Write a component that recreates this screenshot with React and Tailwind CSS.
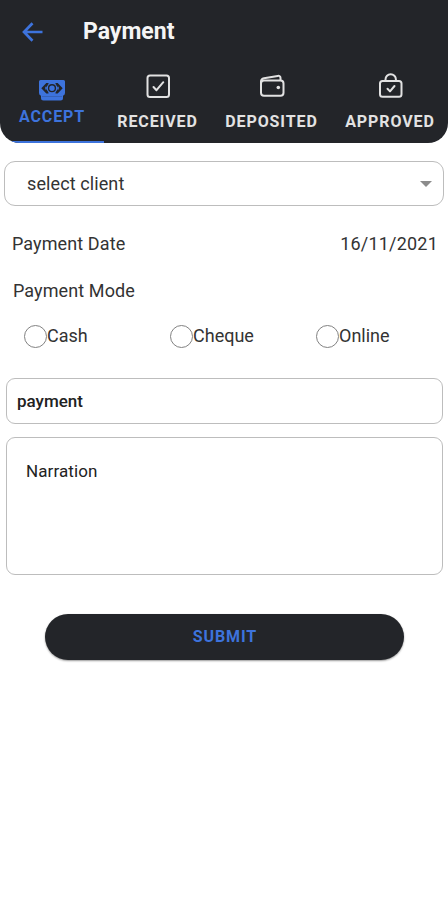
import React, { useState } from 'react';

const CashIcon = () => (
  <svg width="28" height="28" viewBox="0 0 28 28">
    <path d="M2.500 4h23A1.500 1.500 0 0 1 27 5.500V17a3 3 0 0 1-2 2.800V22a2.500 2.500 0 0 1-2.500 2.500h-17A2.500 2.500 0 0 1 3 22v-2.200A3 3 0 0 1 1 17V5.500A1.500 1.500 0 0 1 2.500 4z" fill="currentColor" />
    <path d="M3.300 12.200 8.300 7h2.200v10.400H8.300zM24.700 12.200 19.700 7h-2.200v10.400h2.200z" fill="#232529" />
    <path d="M8 10.800v2.800M20 10.800v2.800" stroke="currentColor" strokeWidth="1.500" />
    <circle cx="14" cy="12.200" r="5.400" fill="currentColor" />
    <circle cx="14" cy="12.200" r="3.400" fill="none" stroke="#232529" strokeWidth="1.400" />
    <path d="M4 20.300h20" stroke="#232529" strokeWidth="0.500" opacity="0.500" />
  </svg>
);

const CheckboxIcon = () => (
  <svg width="28" height="28" viewBox="0 0 28 28" fill="none" stroke="currentColor" strokeWidth="2" strokeLinecap="round" strokeLinejoin="round">
    <rect x="3.500" y="3.500" width="21.500" height="21.500" rx="2.500" />
    <path d="m9.500 15 3 3.200 6.800-8" />
  </svg>
);

const WalletIcon = () => (
  <svg width="28" height="28" viewBox="0 0 28 28" fill="none" stroke="currentColor" strokeWidth="2" strokeLinejoin="round">
    <rect x="3" y="8.500" width="22.500" height="15.300" rx="3" />
    <path d="M3 12.500V9.500c0-2 1.200-3 3-3.300l13.700-2.300c1.600-.3 2.800.6 2.800 2.200v2.400" />
    <circle cx="20.300" cy="15.500" r="1.800" fill="currentColor" stroke="none" />
  </svg>
);

const BagIcon = () => (
  <svg width="28" height="28" viewBox="0 0 28 28" fill="none" stroke="currentColor" strokeWidth="2" strokeLinecap="round" strokeLinejoin="round">
    <rect x="4" y="9" width="21.500" height="15.800" rx="2.500" />
    <path d="M9.500 9V7.500a5.200 5.200 0 0 1 10.400 0V9M11.500 16.800l2.500 2.600 4.500-5.400" />
  </svg>
);

const tabs = [
  { label: 'ACCEPT', icon: CashIcon, width: 'w-[104px]' },
  { label: 'RECEIVED', icon: CheckboxIcon, width: 'w-[107px]' },
  { label: 'DEPOSITED', icon: WalletIcon, width: 'w-[121px]' },
  { label: 'APPROVED', icon: BagIcon, width: 'w-[116px]' },
];

const modes = ['Cash', 'Cheque', 'Online'];

export default function App() {
  const [active, setActive] = useState('ACCEPT');
  const [mode, setMode] = useState('');

  return (
    <div className="min-h-[900px] w-[448px] bg-white font-[Roboto,sans-serif] text-[18px] text-[#333]">
      <header className="h-[143px] overflow-hidden rounded-b-[20px] bg-[#232529]">
        <div className="flex h-[63px] items-center pl-[22px]">
          <button className="text-[#3d73dc]">
            <svg width="21" height="20" viewBox="0 0 21 20" fill="none" stroke="currentColor" strokeWidth="2.700">
              <path d="M10.500 1.200 2 10l8.500 8.800M2 10h18.500" />
            </svg>
          </button>
          <h1 className="ml-10 text-[23px] font-bold leading-none text-[#f5f5f5]">Payment</h1>
        </div>
        <div className="flex h-20">
          {tabs.map(({ label, icon: Icon, width }) => (
            <button
              key={label}
              onClick={() => setActive(label)}
              className={`${width} flex flex-col items-center text-[16px] font-bold tracking-[0.9px] leading-5 ${
                active === label ? 'border-b-2 border-[#3d73dc] pt-[13px] text-[#3d73dc]' : 'pt-[9px] text-[#e2e2e2]'
              }`}
            >
              <Icon />
              <span className={active === label ? 'mt-[3px]' : 'mt-3'}>{label}</span>
            </button>
          ))}
        </div>
      </header>

      <main>
        <button className="mx-auto mt-[18px] flex h-[45px] w-[440px] items-center justify-between rounded-[11px] border border-[#bdbdbd] pl-[22px] pr-[11px]">
          <span className="tracking-[0.1px]">select client</span>
          <svg width="12" height="6" viewBox="0 0 12 6" fill="#8c8c8c">
            <path d="M0 0h12L6 6z" />
          </svg>
        </button>

        <div className="mt-[26px] flex justify-between pl-3 pr-[10px] leading-6">
          <span className="tracking-[0.1px]">Payment Date</span>
          <span className="tracking-[0.2px]">16/11/2021</span>
        </div>
        <p className="mt-[23px] pl-[13px] leading-6 tracking-[0.1px]">Payment Mode</p>

        <div className="mt-[21px] flex pl-[24px]">
          {modes.map(item => (
            <button key={item} onClick={() => setMode(item)} className="flex w-[146px] shrink-0 items-center leading-6 last:w-auto">
              <span className="flex size-[23px] items-center justify-center rounded-full border-[1.5px] border-[#828282]">
                {mode === item && <span className="size-3 rounded-full bg-[#3d73dc]" />}
              </span>
              <span>{item}</span>
            </button>
          ))}
        </div>

        <input
          placeholder="payment"
          className="ml-[6px] mt-[30px] block h-[46px] w-[437px] rounded-[9px] border border-[#bdbdbd] px-[10px] text-[17px] font-medium outline-none placeholder:text-[#222]"
        />
        <textarea
          placeholder="Narration"
          className="ml-[6px] mt-[13px] block h-[138px] w-[437px] resize-none rounded-[9px] border border-[#bdbdbd] px-[19px] pt-[21px] text-[17px] leading-6 tracking-[0.1px] outline-none placeholder:text-[#222]"
        />

        <button className="mx-auto mt-[39px] block h-[46px] w-[359px] rounded-full bg-[#232529] pl-[2px] text-[16px] font-bold tracking-[0.9px] text-[#3d73dc] shadow-[0_1px_2px_rgba(0,0,0,0.4)]">
          SUBMIT
        </button>
      </main>
    </div>
  );
}
